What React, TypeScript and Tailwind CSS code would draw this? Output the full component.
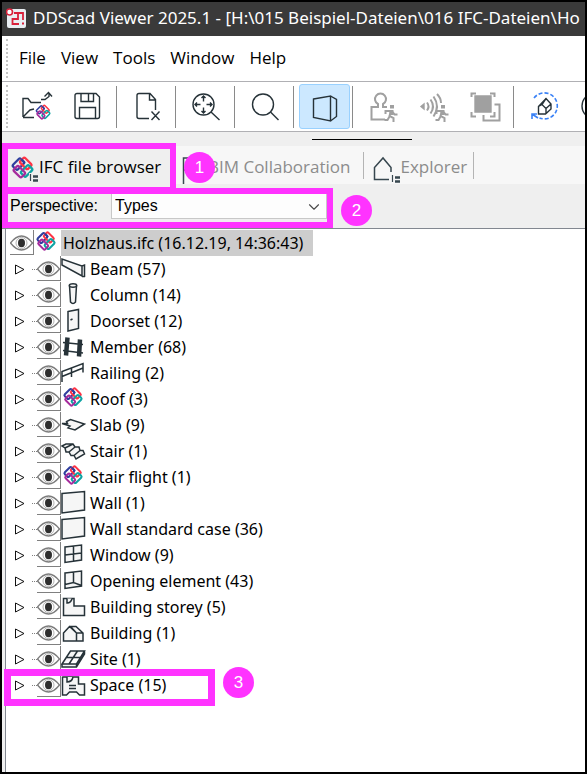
import { useState } from "react";
import type { ReactNode } from "react";
import { ChevronDown } from "lucide-react";
import { clsx } from "clsx";

const MENU = ["File", "View", "Tools", "Window", "Help"];

type Tool = { label: string; icon: ReactNode; active?: boolean; disabled?: boolean };

// four interlocked rings on a 22x22 grid
function IfcRings() {
  return (
    <g strokeWidth="2">
      <rect x="2.6" y="5" width="9.6" height="6" rx="1.4" transform="rotate(-45 7.4 8)" stroke="#2f3e9e" />
      <rect x="9" y="4.4" width="9.6" height="6" rx="1.4" transform="rotate(45 13.8 7.4)" stroke="#ff3344" />
      <rect x="9.8" y="11" width="9.6" height="6" rx="1.4" transform="rotate(-45 14.6 14)" stroke="#0fa3a3" />
      <rect x="3.4" y="11.6" width="9.6" height="6" rx="1.4" transform="rotate(45 8.2 14.6)" stroke="#a62b9c" />
      <path d="M9.8 3.6 13 7" stroke="#2f3e9e" />
    </g>
  );
}

function IfcLogo({ className }: { className?: string }) {
  return (
    <svg viewBox="0 0 22 22" className={clsx("h-[22px] w-[22px] shrink-0", className)} fill="none" aria-hidden>
      <IfcRings />
    </svg>
  );
}

function Walker() {
  return (
    <g stroke="#a0a0a0">
      <path d="M22 14h4v3.5h-4z" fill="#a0a0a0" stroke="none" />
      <path d="M17.5 23v-3h5.500l-1.500 5 4 2v4M21.500 25.500l-2 3.500h-3M24 20.500l2.500 3h3" fill="none" strokeWidth="2" />
      <path d="M21.500 19h4v5h-4z" fill="#a0a0a0" stroke="none" />
    </g>
  );
}

function ToolSvg({ children, stroke = "#263238" }: { children: ReactNode; stroke?: string }) {
  return (
    <svg viewBox="0 0 31 31" className="h-[31px] w-[31px]" fill="none" stroke={stroke} strokeWidth="1.4" aria-hidden>
      {children}
    </svg>
  );
}

const GROUPS: Tool[][] = [
  [
    {
      label: "Open model",
      icon: (
        <ToolSvg>
          <path d="M1 26V7.5h5l3 4h10M1 26.5h11M1 26l7-7 4-1M19 8.500h4l4-3V2M22.500 5.500 26.500 1.500l3.500 4" />
          <g transform="translate(12.5 12.5) scale(.78)">
            <IfcRings />
          </g>
        </ToolSvg>
      ),
    },
    {
      label: "Save",
      icon: (
        <ToolSvg>
          <path d="M4 2.5h19L26.5 6v19.5a2 2 0 0 1-2 2H4a2 2 0 0 1-2-2v-21a2 2 0 0 1 2-2z" />
          <path d="M8 2.5v8h12.5v-8M15.500 3v7.5M6.500 27V16.5h16V27" />
        </ToolSvg>
      ),
    },
  ],
  [
    {
      label: "Close file",
      icon: (
        <ToolSvg>
          <path d="M17 27.5H7a2 2 0 0 1-2-2v-21a2 2 0 0 1 2-2h11l5.500 6V19M17.500 2.500V9h6M19.500 20.500l8 8.500M27.500 20.500l-8 8.500" />
        </ToolSvg>
      ),
    },
  ],
  [
    {
      label: "Zoom extents",
      icon: (
        <ToolSvg>
          <circle cx="12.5" cy="13.5" r="10.5" />
          <path d="M20 21l8.500 8M12.500 10.500v-5M10.500 7l2-2 2 2M12.500 16.500v5M10.500 20l2 2 2-2M9.500 13.500h-5M6 11.500l-2 2 2 2M15.500 13.500h5M19 11.500l2 2-2 2" />
        </ToolSvg>
      ),
    },
  ],
  [
    {
      label: "Zoom",
      icon: (
        <ToolSvg>
          <circle cx="13" cy="13.5" r="10.5" />
          <path d="M20.5 21l8 8" />
        </ToolSvg>
      ),
    },
  ],
  [
    {
      label: "Perspective view",
      active: true,
      icon: (
        <ToolSvg>
          <path d="M4.5 8l17-3v25l-17-3.500zM21.500 5l6 3.500v17l-6 4.500" />
        </ToolSvg>
      ),
    },
  ],
  [
    {
      label: "Walk on surface",
      disabled: true,
      icon: (
        <ToolSvg stroke="#a0a0a0">
          <path d="M17 28.5H3.5V16H10v-3a5.500 5.500 0 1 1 5 0v3h4" strokeWidth="2" />
          <Walker />
        </ToolSvg>
      ),
    },
    {
      label: "Collision sound",
      disabled: true,
      icon: (
        <ToolSvg stroke="#a0a0a0">
          <path d="M5 13v5l-3-2.500z" fill="#a0a0a0" />
          <path d="M8 11.5q3 4 0 8M11.500 8.500q5 7 0 14M14.500 5.500q7 10 0 20M18 3q4 4 4 9" strokeWidth="2" />
          <Walker />
        </ToolSvg>
      ),
    },
    {
      label: "Section selection",
      disabled: true,
      icon: (
        <ToolSvg stroke="#a0a0a0">
          <path d="M5 5h16v16H5z" fill="#a0a0a0" />
          <path
            d="M1.5 6V2.500H6M20 2.500h4.500V6M1.500 21v4.500H6M24.500 13.500h5v16h-16V24M20 25.500h4.500V21"
            strokeWidth="2"
          />
        </ToolSvg>
      ),
    },
  ],
  [
    {
      label: "Orbit",
      icon: (
        <ToolSvg>
          <path d="M5 7A13 13 0 1 1 10.5 27" stroke="#3b82f6" strokeWidth="1.6" strokeDasharray="4 2" />
          <path d="M3 28v-5h5M3 23l6 4" stroke="#3b82f6" strokeWidth="1.6" />
          <path d="M9.5 15.500l7.500-8 5 5.500v5l-5.500 5h-7zM9.500 15.500l3.500-2 4 4v5.500M17 17.500l5-4.500M13 13.500l4-6" />
        </ToolSvg>
      ),
    },
    {
      label: "Rotate",
      icon: (
        <ToolSvg>
          <circle cx="15" cy="15" r="13" />
        </ToolSvg>
      ),
    },
  ],
];

const ICONS = {
  beam: <path d="M1 3v6l20 11V10L1 3zM21 20.5h3M21 10l2.500-1v12" />,
  column: (
    <>
      <path d="M8.5 3.500 9.500 20q2.500 3 5 0l1-16.500" />
      <ellipse cx="12" cy="3.5" rx="3.7" ry="1.7" />
    </>
  ),
  door: (
    <>
      <path d="M7 3.5l10.500-2v19L7 23z" />
      <path d="M9.5 12l2-1" />
    </>
  ),
  member: (
    <>
      <path d="M2 8.5 22 10.500M2 16.500 22 19" />
      <path d="M6.5 3.500 5 21.500M19 5.500 18 22.500" strokeWidth="4.5" />
    </>
  ),
  railing: <path d="M1 22V11.500L22 3.500v9M1 16.500 22 8M10.500 8v9" fill="none" />,
  slab: <path d="M1 11.5h5.500l-1-2 4-2L23.500 12 14 18l-7-2 2-2z" />,
  stair: (
    <path d="M1 8l4-2h7l2 3h4l1 3.500h3L23.500 16 15 21l-2-3.500h-3L8 14H5l-1-4zM4 10l8-4M8 14l6-5M13 17.500l6-5" />
  ),
  wall: <path d="M1 3.500l22.500-2V20L1 23z" />,
  window: <path d="M4 5l16.500-2v15L4 20.500zM12.500 4v15M4 13l16.500-2" />,
  opening: <path d="M4 5l16.500-2v15L4 20.500zM12.500 4v10.500M4 16.500l8.500-2 8 3" />,
  storey: (
    <>
      <path d="M2.5 4.500H13V12h10.500v9.500h-21z" />
      <path d="M6 4.500V9q4 0 5-4.500" />
    </>
  ),
  building: <path d="M2.5 13l6-6.500 7 6.500v8h-13zM8.500 6.500H15L22 13v8h-6.500M15.500 13H22M15.500 13 10 7" />,
  site: <path d="M1 18 9.500 5h14L15.500 18zM1 18v3h14.500l8-13V5M15.500 18v3M8 18l8.500-13M5 11.500h14" />,
  space: (
    <>
      <path d="M1.500 4.500V23h4l3-3h7l3 3h5V12h-6V5H1.500" />
      <path d="M6 5v5q5 0 6-5" />
      <path d="M8 13.500h7M8 16.500h7" />
    </>
  ),
};

type NodeIcon = keyof typeof ICONS | "ifc";

const NODES: { name: string; count: number; icon: NodeIcon }[] = [
  { name: "Beam", count: 57, icon: "beam" },
  { name: "Column", count: 14, icon: "column" },
  { name: "Doorset", count: 12, icon: "door" },
  { name: "Member", count: 68, icon: "member" },
  { name: "Railing", count: 2, icon: "railing" },
  { name: "Roof", count: 3, icon: "ifc" },
  { name: "Slab", count: 9, icon: "slab" },
  { name: "Stair", count: 1, icon: "stair" },
  { name: "Stair flight", count: 1, icon: "ifc" },
  { name: "Wall", count: 1, icon: "wall" },
  { name: "Wall standard case", count: 36, icon: "wall" },
  { name: "Window", count: 9, icon: "window" },
  { name: "Opening element", count: 43, icon: "opening" },
  { name: "Building storey", count: 5, icon: "storey" },
  { name: "Building", count: 1, icon: "building" },
  { name: "Site", count: 1, icon: "site" },
  { name: "Space", count: 15, icon: "space" },
];

function EyeButton({ label }: { label: string }) {
  return (
    <button
      aria-label={`Toggle visibility of ${label}`}
      className="flex h-[25px] w-6 shrink-0 items-center border-r border-b border-[#808080] pt-px"
    >
      <svg viewBox="0 0 23 18" className="h-[18px] w-[23px]" fill="none" aria-hidden>
        <path d="M.5 9Q6 2 11.500 2T22.500 9Q17 16 11.500 16T.5 9z" stroke="#7c7c7c" strokeWidth="1.4" />
        <circle cx="11.5" cy="9" r="5.5" stroke="#b5b5b5" />
        <ellipse cx="11.5" cy="9" rx="3.5" ry="4.2" fill="#2e2e2e" />
      </svg>
    </button>
  );
}

function TypeIcon({ icon }: { icon: NodeIcon }) {
  if (icon === "ifc") {
    return <IfcLogo className="mr-0.5 ml-px" />;
  }
  return (
    <svg
      viewBox="0 0 25 26"
      className="h-[26px] w-[25px] shrink-0"
      fill="#f6f6f6"
      stroke="#263238"
      strokeWidth="1.5"
      aria-hidden
    >
      {ICONS[icon]}
    </svg>
  );
}

function Badge({ n, className }: { n: number; className: string }) {
  return (
    <span
      className={clsx(
        "absolute z-20 grid h-[31px] w-[31px] place-items-center rounded-full bg-[#ff33ff] font-['Liberation_Sans'] text-[17px] text-white",
        className,
      )}
    >
      {n}
    </span>
  );
}

function Frame({ className }: { className: string }) {
  return <span aria-hidden className={clsx("pointer-events-none absolute z-10 border-[#ff33ff]", className)} />;
}

// small list marker at the corner of the panel tab icons
function ListMark() {
  return (
    <g stroke="#37474f">
      <path d="M20.5 19v7" strokeWidth="1.2" />
      <path d="M23 21.500h5M23 25.500h5" strokeWidth="2.4" />
    </g>
  );
}

export default function App() {
  const [perspective, setPerspective] = useState("Types");

  return (
    <div className="flex min-h-screen flex-col overflow-hidden border-2 border-black bg-white font-['Open_Sans',sans-serif] text-black">
      <header className="flex h-[34px] items-center gap-1.5 overflow-hidden bg-[#3a3a3a] pb-0.5 pl-1 text-white">
        <svg viewBox="0 0 21 21" className="h-[21px] w-[21px] shrink-0" fill="none" aria-hidden>
          <rect x="1" y="1" width="19" height="19" rx="2" fill="#e9eef2" />
          <path d="M8 5h4v6H6.500v5H13M12 5h5v7" stroke="#d9213b" strokeWidth="1.8" />
          <path d="M16 15.500h2" stroke="#d9213b" strokeWidth="2" />
          <circle cx="3.5" cy="4" r="3" fill="#fff" stroke="#d9213b" strokeWidth="1.6" />
        </svg>
        <h1 className="font-['Noto_Sans',sans-serif] text-[17px] whitespace-nowrap">
          DDScad Viewer 2025.1 - [H:\015 Beispiel-Dateien\016 IFC-Dateien\Ho
        </h1>
      </header>

      <nav className="flex h-[46px] items-stretch border-b border-[#b0b0b4] pl-1 text-[17px]">
        <span className="my-[3px] w-[6px] border-l-2 border-dotted border-[#c4c4c4]" />
        <div className="flex items-center gap-[15px] pb-0.5 pl-[7px]">
          {MENU.map((item) => (
            <button key={item} className="leading-6">
              {item}
            </button>
          ))}
        </div>
      </nav>

      <div role="toolbar" className="flex h-[50px] items-stretch overflow-hidden border-b border-[#b0b0b4] pl-1">
        <span className="my-[3px] w-[6px] shrink-0 border-l-2 border-dotted border-[#c4c4c4]" />
        {GROUPS.map((group, g) => (
          <div key={g} className="flex shrink-0 items-center">
            {g > 0 && <span className="mr-[5px] ml-0.5 h-[42px] w-px bg-[#8a8a8a]" />}
            {group.map((tool) => (
              <button
                key={tool.label}
                aria-label={tool.label}
                disabled={tool.disabled}
                className={clsx(
                  "grid h-[45px] w-[51px] place-items-center rounded-[3px]",
                  tool.active && "border border-[#99d1ff] bg-[#cce8ff]",
                )}
              >
                {tool.icon}
              </button>
            ))}
          </div>
        ))}
      </div>

      <section className="bg-[#efefef]">
        <div className="h-[14px] pt-[7px]">
          <div className="ml-[310px] h-px w-[100px] bg-black" />
        </div>

        <div role="tablist" className="relative flex h-[38px] items-stretch bg-[#f7f7f7] text-[17px]">
          <button role="tab" aria-selected className="flex w-[174px] items-center bg-[#efefef] pt-1 pl-2">
            <svg viewBox="0 0 29 29" className="h-[29px] w-[29px] shrink-0 self-end" fill="none" aria-hidden>
              <g transform="scale(1.14)">
                <IfcRings />
              </g>
              <path d="M19 18h10v11H19z" fill="#efefef" />
              <ListMark />
            </svg>
            <span className="whitespace-nowrap">IFC file browser</span>
          </button>
          <Frame className="-top-[3px] left-0 h-[50px] w-[174px] border-[6px]" />

          <button role="tab" className="flex items-center gap-0.5 pt-1 pl-[6px] text-[#8c8c8c]">
            <svg viewBox="0 0 24 28" className="h-7 w-6 shrink-0 self-end" fill="none" stroke="#37474f" strokeWidth="1.5" aria-hidden>
              <path d="M1.5 28V2h14l-3 6 3 6h-14" />
            </svg>
            <span className="whitespace-nowrap">BIM Collaboration</span>
          </button>
          <Badge n={1} className="top-[6px] left-[182px]" />
          <span className="my-auto ml-[13px] h-[27px] w-px bg-[#b4b4b4]" />

          <button role="tab" className="flex items-center pt-1 pl-2 text-[#8c8c8c]">
            <svg viewBox="0 0 28 28" className="h-7 w-7 shrink-0 self-end" fill="none" stroke="#37474f" strokeWidth="1.5" aria-hidden>
              <path d="M17 23.5H2.500V11.500L11 2l8 9.500V16" />
              <ListMark />
            </svg>
            Explorer
          </button>
          <span className="my-auto ml-[6px] h-[27px] w-px bg-[#b4b4b4]" />
        </div>

        <div className="relative flex h-[45px] items-center border-b border-[#828790] pl-2 font-['Liberation_Sans',sans-serif] text-base">
          <label htmlFor="perspective" className="w-[101px]">
            Perspective:
          </label>
          <div className="relative">
            <select
              id="perspective"
              value={perspective}
              onChange={(e) => setPerspective(e.target.value)}
              className="h-[26px] w-[216px] appearance-none border border-[#c8c8c8] bg-[#fdfdfd] pl-[3px]"
            >
              <option>Types</option>
              <option>Structure</option>
              <option>Layers</option>
            </select>
            <ChevronDown
              strokeWidth={1.5}
              className="pointer-events-none absolute top-[5px] right-1 h-[18px] w-[18px] text-[#4a4a4a]"
            />
          </div>
          <Frame className="top-1 left-0 h-10 w-[331px] border-[6px]" />
          <Badge n={2} className="top-[11px] left-[339px]" />
        </div>
      </section>

      <main className="flex flex-1 bg-[#efefef] pl-[3px]">
        <div className="flex-1 border-l border-[#828790] bg-white pt-px font-['Noto_Sans',sans-serif] text-base leading-[26px]">
          <div className="flex h-[26px] pl-1">
            <EyeButton label="Holzhaus.ifc" />
            <IfcLogo className="ml-px" />
            <span className="ml-1 bg-[#cdcdcd] pr-[10px] pl-0.5 whitespace-nowrap">
              Holzhaus.ifc (16.12.19, 14:36:43)
            </span>
          </div>
          <ul>
            {NODES.map((node) => (
              <li key={node.name} className="relative flex h-[26px]">
                <button aria-label={`Expand ${node.name}`} className="flex w-[26px] items-center pl-[9px]">
                  <svg viewBox="0 0 10 11" className="h-[11px] w-[10px]" fill="#fff" stroke="#111" aria-hidden>
                    <path d="M.5 1v9l8.500-4.500z" />
                  </svg>
                </button>
                <span className="my-auto w-[5px] border-t border-dotted border-[#808080]" />
                <EyeButton label={node.name} />
                <TypeIcon icon={node.icon} />
                <span className="ml-1 whitespace-nowrap">
                  {node.name} ({node.count})
                </span>
                {node.name === "Space" && (
                  <>
                    <Frame className="-top-[3px] -left-[2px] h-[37px] w-[211px] border-[7px]" />
                    <Badge n={3} className="-top-[5px] left-[217px]" />
                  </>
                )}
              </li>
            ))}
          </ul>
        </div>
      </main>
    </div>
  );
}
